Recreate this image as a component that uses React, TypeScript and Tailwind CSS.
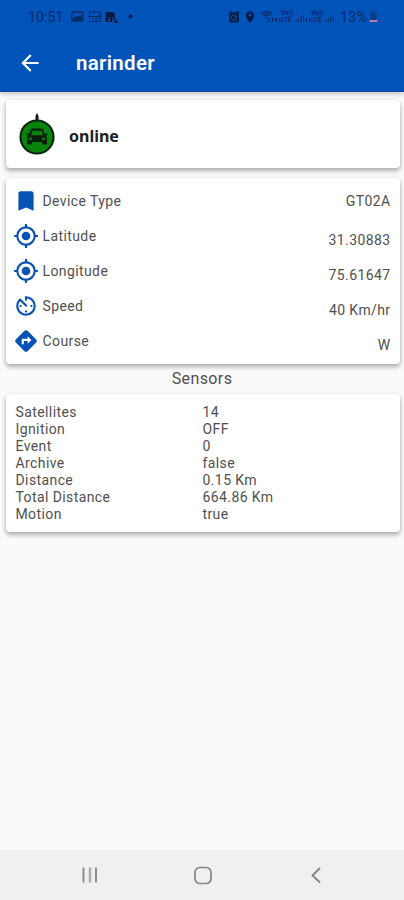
import {
  MdArrowBack,
  MdAvTimer,
  MdBookmark,
  MdDirections,
  MdLocationOn,
  MdMyLocation,
} from "react-icons/md";

const details = [
  { icon: MdBookmark, label: "Device Type", value: "GT02A" },
  { icon: MdMyLocation, label: "Latitude", value: "31.30883" },
  { icon: MdMyLocation, label: "Longitude", value: "75.61647" },
  { icon: MdAvTimer, label: "Speed", value: "40 Km/hr" },
  { icon: MdDirections, label: "Course", value: "W" },
];

const sensors = [
  ["Satellites", "14"],
  ["Ignition", "OFF"],
  ["Event", "0"],
  ["Archive", "false"],
  ["Distance", "0.15 Km"],
  ["Total Distance", "664.86 Km"],
  ["Motion", "true"],
];

const card =
  "ml-[6px] mr-[4px] rounded-[4px] bg-white shadow-[0_3px_5px_rgba(0,0,0,0.26),0_1px_4px_rgba(0,0,0,0.12)]";

function SimSignal() {
  return (
    <div className="flex h-[14px] items-center">
      <svg width="6" height="14" viewBox="0 0 6 14" fill="none" stroke="currentColor">
        <path d="M1.5 8v4m-1-2.5l1-1.5M4.5 8v4m1-1.5l-1 1.5" />
      </svg>
      <div className="flex w-[14px] flex-col text-[6.5px] font-bold leading-[7px]">
        <span>Vo))</span>
        <span>LTE</span>
      </div>
      <svg width="10" height="14" viewBox="0 0 10 14" stroke="currentColor">
        <path d="M1 12v-2M3.5 12V8.5M6 12V6.5M8.5 12V5" />
      </svg>
    </div>
  );
}

function StatusBar() {
  return (
    <div className="flex h-[33px] items-center pl-[28px] pr-[26px] text-[#062a63]">
      <span className="w-[37px] text-[14px] leading-none tracking-[0.1px]">10:51</span>
      {/* Notification icons */}
      <svg className="ml-[6px]" width="64" height="14" viewBox="0 0 64 14" fill="none" stroke="currentColor">
        <rect x="0.8" y="2" width="11" height="9" rx="1" strokeWidth="1.4" />
        <path d="M1.5 10l3-3.5 2 1.5 2.5-3 2.5 5z" fill="currentColor" />
        <path d="M18.5 6V2H29v4M17 6.5h13.5M18.5 7v4.5H29V7M21 9h6" />
        <path d="M34.5 2H42l2 2v3h-2.5v5H39V7.5h-1.5V12h-3z" fill="#041c44" stroke="none" />
        <path d="M43.5 7v2.5L46 12h-3" stroke="#041c44" strokeWidth="1.5" />
        <circle cx="59.5" cy="6.5" r="2" fill="#041c44" stroke="none" />
      </svg>
      <div className="flex-1" />
      {/* Alarm */}
      <svg className="text-[#041c44]" width="12" height="12" viewBox="0 0 12 12" fill="none" stroke="currentColor">
        <rect x="1" y="1.5" width="10" height="10" rx="2" fill="currentColor" stroke="none" />
        <path d="M1 1.5h3M8 1.5h3" strokeWidth="2" />
        <circle cx="6" cy="6.5" r="2.7" stroke="#0053b8" strokeWidth="0.9" />
        <path d="M6 4.5v2h1.5" stroke="#0053b8" strokeWidth="0.8" />
      </svg>
      <MdLocationOn className="ml-[3px] size-[14px] text-[#041c44]" />
      {/* Wi-Fi */}
      <svg className="ml-[3px]" width="15" height="14" viewBox="0 0 15 14" fill="none" stroke="currentColor">
        <path d="M1 3.5q5.5-3 11 0M3 6q3.5-2.5 7 0M5 8.5q1.5-1.5 3 0" strokeWidth="1.5" />
        <path d="M9.5 8v4m-1.5-2l1.5 2M12.5 12V8m0 0l1.5 2" />
      </svg>
      <SimSignal />
      <SimSignal />
      <span className="ml-[5px] w-[28px] text-[14px] leading-none tracking-[0.5px]">13%</span>
      <svg className="ml-px" width="9" height="13" viewBox="0 0 9 13">
        <path d="M3 1h3v1.500h1.500V10h-6V2.500H3z" fill="#093e88" />
        <path d="M0.5 10h8v2h-8z" fill="#b77c9e" />
      </svg>
    </div>
  );
}

function VehicleMarker() {
  return (
    <svg width="36" height="42" viewBox="0 0 36 42">
      <path d="M18 0l1.500 3v5h-3V3z" fill="#151515" />
      <circle cx="18" cy="24" r="16.5" fill="#07840b" stroke="#0c2410" strokeWidth="2.2" />
      <path
        d="M12.5 16h11l2.5 6.5 1.5 1.5v7h-4v-2.5h-11V31h-4v-7l1.5-1.5z"
        fill="#071f0a"
        stroke="#071f0a"
        strokeLinejoin="round"
      />
      <path d="M13.5 17.8h9l1.5 4.5H12z" fill="#07840b" />
      <path d="M7.5 21.5h3M25.5 21.5h3" stroke="#071f0a" strokeWidth="2" />
      <circle cx="11.5" cy="25.7" r="1.5" fill="#07840b" />
      <circle cx="24.5" cy="25.7" r="1.5" fill="#07840b" />
    </svg>
  );
}

export default function App() {
  return (
    <div className="flex h-[900px] w-[404px] flex-col overflow-hidden bg-[#fafafa] font-[Roboto,sans-serif] text-[#505050]">
      <header className="h-[92px] shrink-0 border-b border-[#0343a4] bg-[#0053b8] shadow-[0_2px_5px_rgba(0,0,0,0.22)]">
        <StatusBar />
        <div className="flex h-[60px] items-center pl-[17px] text-white">
          <MdArrowBack className="size-[26px]" />
          <h1 className="ml-[33px] text-[20.5px] font-semibold leading-none tracking-[0.3px]">narinder</h1>
        </div>
      </header>

      <main className="flex-1 pt-[8px]">
        <section className={`${card} flex h-[68px] items-center pl-[13px]`}>
          <VehicleMarker />
          <span className="ml-[14px] mt-[4px] font-['Noto_Sans',sans-serif] text-[16px] font-bold leading-none text-[#202020]">
            online
          </span>
        </section>

        <section className={`${card} mt-[10px] h-[186px] pt-[11px]`}>
          {details.map(({ icon: Icon, label, value }, i) => (
            <div key={label} className="flex h-[35px] items-start pl-[7px] pr-[9.5px] text-[14px] leading-[25px] tracking-[0.4px]">
              <Icon className="-mt-px size-[26px] text-[#0753b5]" />
              <span className="ml-[3.5px] flex-1">{label}</span>
              <span className={i === 0 ? "" : "pt-[4px]"}>{value}</span>
            </div>
          ))}
        </section>

        <h2 className="h-[30px] text-center text-[16px] leading-[29px] tracking-[0.4px]">Sensors</h2>

        <section className={`${card} h-[138px] pl-[9.5px] pt-[10px]`}>
          {sensors.map(([name, value]) => (
            <div key={name} className="flex text-[14px] leading-[17px] tracking-[0.4px]">
              <span className="w-[187px]">{name}</span>
              <span>{value}</span>
            </div>
          ))}
        </section>
      </main>

      {/* Android navigation */}
      <nav className="flex h-[50px] shrink-0 items-center bg-[#f0f0f0] pl-[81px] text-[#858585]">
        <svg width="18" height="18" viewBox="0 0 18 18" stroke="currentColor" strokeWidth="1.8">
          <path d="M2.5 1.5v15M15 1.5v15" />
          <path d="M9 1.5v15" stroke="#adadad" strokeWidth="2.5" />
        </svg>
        <svg className="ml-[94px]" width="20" height="20" viewBox="0 0 20 20" fill="none" stroke="currentColor" strokeWidth="1.7">
          <rect x="2" y="2.5" width="16" height="16" rx="5" />
        </svg>
        <svg className="ml-[96px]" width="14" height="18" viewBox="0 0 14 18" fill="none" stroke="currentColor" strokeWidth="1.9">
          <path d="M11 2L3.5 9.500l7.500 7" />
        </svg>
      </nav>
    </div>
  );
}
